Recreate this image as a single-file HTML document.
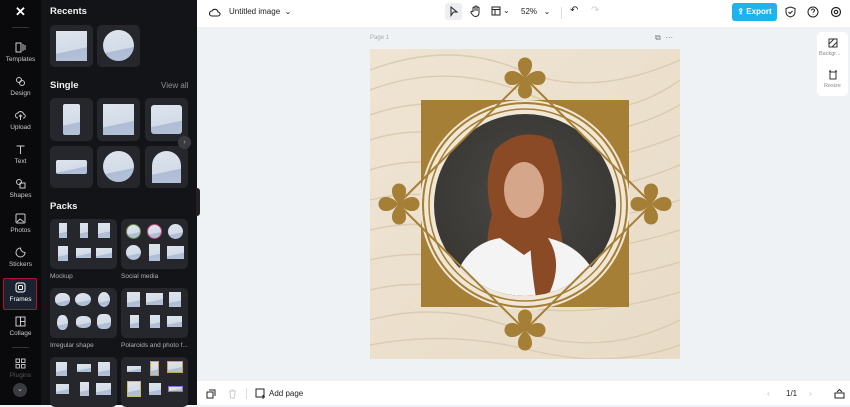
<!DOCTYPE html>
<html><head><meta charset="utf-8">
<style>
*{box-sizing:border-box;margin:0;padding:0}
body{width:850px;height:405px;overflow:hidden;font-family:"Liberation Sans",sans-serif;background:#eef2f4;position:relative}
.rail{position:absolute;left:0;top:0;width:41px;height:405px;background:#0a0a0c}
.panel{position:absolute;left:41px;top:0;width:156px;height:405px;background:#131417}
.ri{position:absolute;left:0;width:41px;text-align:center;color:#c8c9cc;font-size:6.5px}
.ri svg{display:block;margin:0 auto 3px}
.h{position:absolute;color:#f2f2f2;font-weight:bold;font-size:9.5px}
.tile{position:absolute;background:#26272c;border-radius:5px}
.img{position:absolute;background:linear-gradient(168deg,#dfe5ee 0%,#d2dbe7 62%,#aebdd4 63%,#b4c3da 100%)}
.lbl{position:absolute;color:#aeb0b4;font-size:6.5px}
.top{position:absolute;left:197px;top:0;width:653px;height:27px;background:#fff}
.bot{position:absolute;left:197px;top:381px;width:653px;height:24px;background:#fff}
.t{position:absolute;font-size:8px;color:#222}
</style></head><body>
<div class="rail">
 <div class="ri" style="top:4px;color:#fff;font-size:13px;font-weight:bold">✕</div>
 <div style="position:absolute;left:12px;top:27px;width:17px;height:1px;background:#333"></div>
 <div class="ri" style="top:42px"><svg width="11" height="11" viewBox="0 0 11 11" fill="none" stroke="#ccc"><rect x="1" y="1" width="5" height="9"/><path d="M8 2v7M10 3v5"/></svg>Templates</div>
 <div class="ri" style="top:76px"><svg width="11" height="11" viewBox="0 0 11 11" fill="none" stroke="#ccc"><circle cx="4" cy="4" r="2.5"/><circle cx="7" cy="7" r="2.5"/></svg>Design</div>
 <div class="ri" style="top:110px"><svg width="11" height="11" viewBox="0 0 11 11" fill="none" stroke="#ccc"><path d="M3 8a2.5 2.5 0 010-5 3 3 0 015.5 1A2 2 0 018 8M5.5 5v5M4 6.5l1.5-1.5 1.5 1.5"/></svg>Upload</div>
 <div class="ri" style="top:144px"><svg width="11" height="11" viewBox="0 0 11 11" fill="none" stroke="#ccc"><path d="M1.5 2h8M5.5 2v8"/></svg>Text</div>
 <div class="ri" style="top:178px"><svg width="11" height="11" viewBox="0 0 11 11" fill="none" stroke="#ccc"><circle cx="4" cy="4" r="2.5"/><rect x="5" y="5" width="5" height="5"/></svg>Shapes</div>
 <div class="ri" style="top:213px"><svg width="11" height="11" viewBox="0 0 11 11" fill="none" stroke="#ccc"><rect x="1" y="1" width="9" height="9" rx="1"/><path d="M2 9l3-3 4 3"/></svg>Photos</div>
 <div class="ri" style="top:247px"><svg width="11" height="11" viewBox="0 0 11 11" fill="none" stroke="#ccc"><path d="M5.5 1a4.5 4.5 0 104.5 4.5c-2.5 0-4.5-2-4.5-4.5z"/></svg>Stickers</div>
 <div style="position:absolute;left:3px;top:278px;width:34px;height:32px;border:1.5px solid #b0112f;background:#1c2330;border-radius:2px"></div>
 <div class="ri" style="top:282px;color:#fff"><svg width="11" height="11" viewBox="0 0 11 11" fill="none" stroke="#fff"><rect x="1" y="1" width="9" height="9" rx="2"/><rect x="3.5" y="3.5" width="4" height="4" rx="1"/></svg>Frames</div>
 <div class="ri" style="top:316px"><svg width="11" height="11" viewBox="0 0 11 11" fill="none" stroke="#ccc"><rect x="1" y="1" width="9" height="9"/><path d="M5.5 1v9M5.5 5.5h4.5"/></svg>Collage</div>
 <div style="position:absolute;left:12px;top:347px;width:17px;height:1px;background:#333"></div>
 <div class="ri" style="top:358px;color:#555"><svg width="11" height="11" viewBox="0 0 11 11" fill="none" stroke="#bbb"><rect x="1" y="1" width="3.5" height="3.5"/><rect x="6.5" y="1" width="3.5" height="3.5"/><rect x="1" y="6.5" width="3.5" height="3.5"/><rect x="6.5" y="6.5" width="3.5" height="3.5"/></svg>Plugins</div>
 <div style="position:absolute;left:13px;top:383px;width:14px;height:14px;border-radius:50%;background:#3a3b40;color:#ccc;font-size:7px;text-align:center;line-height:14px">⌄</div>
</div>
<div class="panel">
 <div class="h" style="left:9px;top:6px">Recents</div>
 <div class="tile" style="left:9px;top:25px;width:43px;height:42px"><div class="img" style="left:6px;top:6px;width:31px;height:30px"></div></div>
 <div class="tile" style="left:56px;top:25px;width:43px;height:42px"><div class="img" style="left:6px;top:5px;width:31px;height:31px;border-radius:50%"></div></div>
 <div class="h" style="left:9px;top:80px">Single</div>
 <div style="position:absolute;left:120px;top:81px;color:#8e9094;font-size:8px">View all</div>
 <div class="tile" style="left:9px;top:98px;width:43px;height:43px"><div class="img" style="left:13px;top:6px;width:17px;height:31px;border-radius:2px"></div></div>
 <div class="tile" style="left:56px;top:98px;width:43px;height:43px"><div class="img" style="left:6px;top:6px;width:31px;height:31px"></div></div>
 <div class="tile" style="left:104px;top:98px;width:43px;height:43px"><div class="img" style="left:6px;top:7px;width:31px;height:29px;border-radius:3px"></div></div>
 <div class="tile" style="left:9px;top:146px;width:43px;height:42px"><div class="img" style="left:6px;top:14px;width:31px;height:14px;border-radius:2px"></div></div>
 <div class="tile" style="left:56px;top:146px;width:43px;height:42px"><div class="img" style="left:6px;top:5px;width:31px;height:31px;border-radius:50%"></div></div>
 <div class="tile" style="left:104px;top:146px;width:43px;height:42px"><div class="img" style="left:7px;top:5px;width:29px;height:32px;border-radius:15px 15px 0 0"></div></div>
 <div style="position:absolute;left:137px;top:136px;width:13px;height:13px;border-radius:50%;background:#3a3b40;color:#aaa;font-size:7px;text-align:center;line-height:13px">›</div>
 <div class="h" style="left:9px;top:201px">Packs</div>
 <div class="tile" style="left:9px;top:219px;width:67px;height:50px">
  <div class="img" style="left:9px;top:4px;width:8px;height:15px"></div><div class="img" style="left:30px;top:4px;width:8px;height:15px"></div><div class="img" style="left:48px;top:4px;width:12px;height:15px"></div>
  <div class="img" style="left:8px;top:27px;width:10px;height:15px"></div><div class="img" style="left:26px;top:29px;width:15px;height:10px"></div><div class="img" style="left:46px;top:29px;width:16px;height:10px"></div></div>
 <div class="tile" style="left:80px;top:219px;width:67px;height:50px">
  <div class="img" style="left:5px;top:5px;width:15px;height:15px;border-radius:50%;border:1px solid #6a8a4a"></div><div class="img" style="left:26px;top:5px;width:15px;height:15px;border-radius:50%;border:1px solid #c24a7a"></div><div class="img" style="left:47px;top:5px;width:15px;height:15px;border-radius:50%"></div>
  <div class="img" style="left:5px;top:26px;width:15px;height:15px;border-radius:50%"></div><div class="img" style="left:28px;top:25px;width:11px;height:17px"></div><div class="img" style="left:46px;top:27px;width:17px;height:13px"></div></div>
 <div class="lbl" style="left:9px;top:273px">Mockup</div><div class="lbl" style="left:80px;top:273px">Social media</div>
 <div class="tile" style="left:9px;top:288px;width:67px;height:50px">
  <div class="img" style="left:5px;top:5px;width:15px;height:13px;border-radius:45%"></div><div class="img" style="left:25px;top:5px;width:16px;height:13px;border-radius:50%"></div><div class="img" style="left:48px;top:4px;width:12px;height:15px;border-radius:50%"></div>
  <div class="img" style="left:7px;top:27px;width:11px;height:15px;border-radius:45%"></div><div class="img" style="left:26px;top:28px;width:15px;height:12px;border-radius:40%"></div><div class="img" style="left:47px;top:26px;width:14px;height:15px;border-radius:35%"></div></div>
 <div class="tile" style="left:80px;top:288px;width:67px;height:50px">
  <div class="img" style="left:6px;top:4px;width:13px;height:15px"></div><div class="img" style="left:25px;top:5px;width:17px;height:12px"></div><div class="img" style="left:48px;top:4px;width:12px;height:15px"></div>
  <div class="img" style="left:9px;top:27px;width:9px;height:13px"></div><div class="img" style="left:29px;top:27px;width:10px;height:13px"></div><div class="img" style="left:46px;top:28px;width:15px;height:11px"></div></div>
 <div class="lbl" style="left:9px;top:342px">Irregular shape</div><div class="lbl" style="left:80px;top:342px">Polaroids and photo f...</div>
 <div class="tile" style="left:9px;top:357px;width:67px;height:50px">
  <div class="img" style="left:6px;top:5px;width:11px;height:14px"></div><div class="img" style="left:27px;top:7px;width:14px;height:8px"></div><div class="img" style="left:48px;top:5px;width:12px;height:14px"></div>
  <div class="img" style="left:6px;top:27px;width:13px;height:10px"></div><div class="img" style="left:30px;top:25px;width:9px;height:14px"></div><div class="img" style="left:46px;top:26px;width:15px;height:12px"></div></div>
 <div class="tile" style="left:80px;top:357px;width:67px;height:50px">
  <div class="img" style="left:6px;top:9px;width:14px;height:6px"></div><div class="img" style="left:29px;top:4px;width:9px;height:15px;border:1px solid #c9a060"></div><div class="img" style="left:46px;top:4px;width:16px;height:12px;border:1px solid #c9a060"></div>
  <div class="img" style="left:6px;top:24px;width:14px;height:16px;border:1px solid #c9c060"></div><div class="img" style="left:28px;top:26px;width:12px;height:12px"></div><div class="img" style="left:47px;top:29px;width:15px;height:6px;border:1px solid #8a70e0"></div></div>
</div>
<div style="position:absolute;left:196px;top:188px;width:4px;height:28px;background:#222;border-radius:0 3px 3px 0"></div>
<div class="top">
 <svg style="position:absolute;left:12px;top:7px" width="12" height="12" viewBox="0 0 12 12" fill="none" stroke="#222" stroke-width="1.1"><path d="M3 9a2.5 2.5 0 010-5 3.2 3.2 0 016 1 2 2 0 010 4z"/></svg>
 <div class="t" style="left:32px;top:7px">Untitled image &nbsp;⌄</div>
 <div style="position:absolute;left:248px;top:3px;width:17px;height:17px;background:#eceef1;border-radius:3px"></div>
 <svg style="position:absolute;left:252px;top:6px" width="10" height="11" viewBox="0 0 10 11" fill="none" stroke="#222"><path d="M2 1l6 5H4.5L2 9.5z"/></svg>
 <svg style="position:absolute;left:273px;top:5px" width="11" height="12" viewBox="0 0 11 12" fill="none" stroke="#222"><path d="M3 7V3a1 1 0 012 0v3M5 6V2a1 1 0 012 0v4M7 6V3a1 1 0 012 0v5c0 2-1.5 3.5-3.5 3.5S2.5 10 1.5 8.5L1 7.5a1 1 0 012-.5"/></svg>
 <svg style="position:absolute;left:294px;top:6px" width="10" height="10" viewBox="0 0 10 10" fill="none" stroke="#222"><rect x="1" y="1" width="8" height="8"/><path d="M1 3.5h8M4 3.5v5.5"/></svg>
 <div class="t" style="left:306px;top:6px">⌄</div>
 <div class="t" style="left:324px;top:7px">52% &nbsp;&nbsp;⌄</div>
 <div style="position:absolute;left:364px;top:7px;width:1px;height:12px;background:#ddd"></div>
 <div class="t" style="left:373px;top:5px;font-size:10px">↶</div>
 <div class="t" style="left:394px;top:5px;font-size:10px;color:#ccc">↷</div>
 <div style="position:absolute;left:535px;top:3px;width:45px;height:18px;background:#1fb3ec;border-radius:3px;color:#fff;font-size:8px;font-weight:bold;line-height:18px;text-align:center">⇪ Export</div>
 <svg style="position:absolute;left:588px;top:6px" width="11" height="12" viewBox="0 0 11 12" fill="none" stroke="#222"><path d="M5.5 1L10 2.5V6c0 3-2.5 4.5-4.5 5C3.5 10.5 1 9 1 6V2.5z M3.5 6l1.5 1.5L7.5 5"/></svg>
 <svg style="position:absolute;left:610px;top:6px" width="12" height="12" viewBox="0 0 12 12" fill="none" stroke="#222"><circle cx="6" cy="6" r="5"/><path d="M4.5 4.5a1.5 1.5 0 113 0c0 1-1.5 1.2-1.5 2.2M6 8.5v.5"/></svg>
 <svg style="position:absolute;left:633px;top:6px" width="12" height="12" viewBox="0 0 12 12" fill="none" stroke="#222" stroke-width="1.2"><circle cx="6" cy="6" r="4.5"/><circle cx="6" cy="6" r="1.7"/></svg>
</div>
<div style="position:absolute;left:817px;top:32px;width:31px;height:64px;background:#fff;border-radius:5px"></div>
<svg style="position:absolute;left:828px;top:38px" width="10" height="10" viewBox="0 0 10 10" fill="none" stroke="#333"><rect x="1" y="1" width="8" height="8"/><path d="M1 6l5-5M4 9l5-5"/></svg>
<div style="position:absolute;left:819px;top:51px;font-size:5.5px;color:#888">Backgr...</div>
<svg style="position:absolute;left:828px;top:70px" width="10" height="10" viewBox="0 0 10 10" fill="none" stroke="#333"><rect x="2" y="2" width="6" height="7"/><path d="M1 1h2M7 1h2"/></svg>
<div style="position:absolute;left:824px;top:83px;font-size:5.5px;color:#888">Resize</div>
<div style="position:absolute;left:370px;top:35px;font-size:6px;color:#aaa">Page 1</div>
<div style="position:absolute;left:655px;top:33px;font-size:8px;color:#777">⧉ &nbsp;···</div>
<svg style="position:absolute;left:370px;top:49px" width="310" height="310" viewBox="370 49 310 310">
 <defs>
  <linearGradient id="sand" x1="0" y1="0" x2="1" y2="1"><stop offset="0" stop-color="#efe4d2"/><stop offset="1" stop-color="#e8dcc8"/></linearGradient>
  <radialGradient id="ph" cx="0.5" cy="0.45" r="0.6"><stop offset="0" stop-color="#4a4844"/><stop offset="1" stop-color="#363532"/></radialGradient>
  <clipPath id="cc"><circle cx="525" cy="205" r="91"/></clipPath>
  <path id="pet" d="M0 0C-3-3-7.5-8-7-13.5A7 7 0 0 1 7-13.5C7.5-8 3-3 0 0z"/>
  <g id="fl"><use href="#pet"/><use href="#pet" transform="rotate(90)"/><use href="#pet" transform="rotate(180)"/><use href="#pet" transform="rotate(270)"/></g>
 </defs>
 <rect x="370" y="49" width="310" height="310" fill="url(#sand)"/>
 <g fill="none" stroke="#d6c6ad" stroke-width="1.4" opacity="0.8">
  <path d="M370 70 Q450 40 520 70 T680 60"/><path d="M370 90 Q450 60 530 95 T680 80"/><path d="M370 115 Q440 90 520 120 T680 105"/>
  <path d="M370 140 Q430 120 500 150 T680 135"/><path d="M370 170 Q430 150 500 180 T680 165"/><path d="M370 200 Q430 185 500 210 T680 200"/>
  <path d="M370 230 Q430 215 500 240 T680 230"/><path d="M370 260 Q430 245 500 270 T680 262"/><path d="M370 290 Q430 275 500 300 T680 292"/>
  <path d="M370 320 Q440 300 520 330 T680 320"/><path d="M370 345 Q450 330 530 350 T680 345"/>
 </g>
 <rect x="421" y="100" width="208" height="207" fill="#a57f36"/>
 <circle cx="525" cy="205" r="105" fill="#f0e7d6"/>
 <g clip-path="url(#cc)">
  <rect x="430" y="110" width="190" height="190" fill="url(#ph)"/>
  <path d="M495 150 Q520 125 552 140 Q568 180 558 220 Q570 260 552 300 L500 300 Q480 250 492 215 Q482 180 495 150z" fill="#8b4a26"/>
  <ellipse cx="524" cy="190" rx="20" ry="28" fill="#d6a68a"/>
  <path d="M450 300 Q458 245 500 238 L524 255 L548 238 Q592 248 605 300z" fill="#f4f4f4"/>
  <path d="M540 228 Q566 255 550 292 L536 298 Q530 260 530 232z" fill="#8b4a26"/>
 </g>
 <g fill="none" stroke="#a57f36" stroke-width="2">
  <circle cx="525" cy="205" r="102"/><circle cx="525" cy="205" r="96" stroke-width="1.5"/>
  <path d="M525 78 L652 204 L525 330 L398 204 Z"/>
 </g>
 <g fill="#a57f36">
  <use href="#fl" transform="translate(525,78)"/>
  <use href="#fl" transform="translate(525,330)"/>
  <use href="#fl" transform="translate(399,204)"/>
  <use href="#fl" transform="translate(651,204)"/>
 </g>
</svg>
<div class="bot">
 <svg style="position:absolute;left:9px;top:8px" width="10" height="10" viewBox="0 0 10 10" fill="none" stroke="#222"><rect x="1" y="3" width="6" height="6"/><path d="M3 1h6v6"/></svg>
 <svg style="position:absolute;left:31px;top:8px" width="9" height="10" viewBox="0 0 9 10" fill="none" stroke="#ccc"><path d="M1 2h7M2 2l.5 7h4L7 2M3.5 1h2"/></svg>
 <div style="position:absolute;left:49px;top:7px;width:1px;height:11px;background:#ddd"></div>
 <svg style="position:absolute;left:58px;top:7px" width="11" height="11" viewBox="0 0 11 11" fill="none" stroke="#222"><rect x="1" y="1" width="8" height="8"/><path d="M8 7v4M6 9h4"/></svg>
 <div class="t" style="left:72px;top:8px">Add page</div>
 <div class="t" style="left:570px;top:8px;color:#bbb">‹</div>
 <div class="t" style="left:589px;top:8px">1/1</div>
 <div class="t" style="left:612px;top:8px;color:#bbb">›</div>
 <svg style="position:absolute;left:637px;top:7px" width="11" height="11" viewBox="0 0 11 11" fill="none" stroke="#222"><rect x="1" y="5" width="9" height="5"/><path d="M3 4l2.5-2.5L8 4"/></svg>
</div>
</body></html>
